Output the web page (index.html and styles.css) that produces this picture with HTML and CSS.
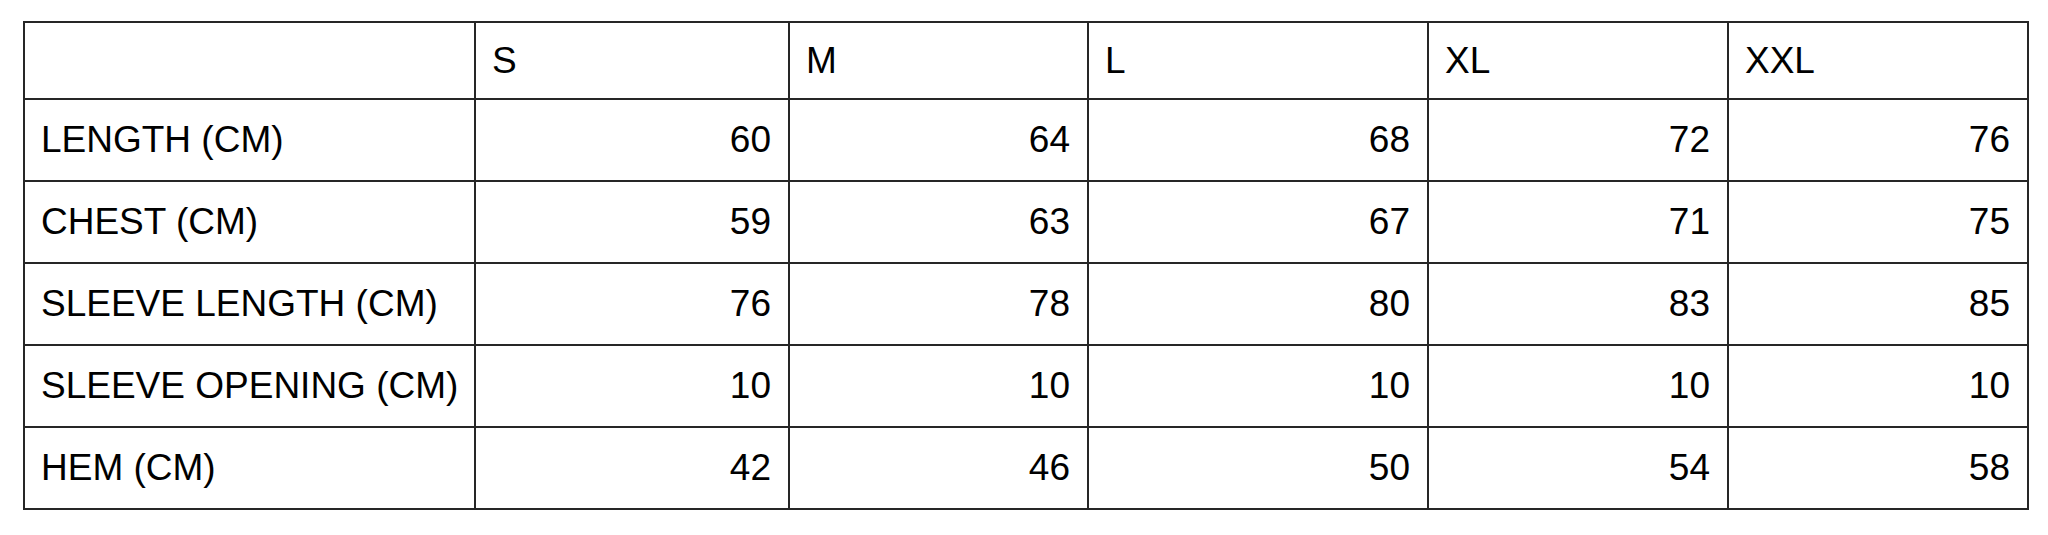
FILE: index.html
```html
<!DOCTYPE html>
<html>
<head>
<meta charset="utf-8">
<link rel="stylesheet" href="styles.css">
</head>
<body>
<table class="size-table">
  <colgroup>
    <col class="c-label">
    <col class="c-s">
    <col class="c-m">
    <col class="c-l">
    <col class="c-xl">
    <col class="c-xxl">
  </colgroup>
  <thead>
    <tr class="head-row">
      <th></th><th>S</th><th>M</th><th>L</th><th>XL</th><th>XXL</th>
    </tr>
  </thead>
  <tbody>
    <tr><td class="label">LENGTH (CM)</td><td>60</td><td>64</td><td>68</td><td>72</td><td>76</td></tr>
    <tr><td class="label">CHEST (CM)</td><td>59</td><td>63</td><td>67</td><td>71</td><td>75</td></tr>
    <tr><td class="label">SLEEVE LENGTH (CM)</td><td>76</td><td>78</td><td>80</td><td>83</td><td>85</td></tr>
    <tr><td class="label">SLEEVE OPENING (CM)</td><td>10</td><td>10</td><td>10</td><td>10</td><td>10</td></tr>
    <tr><td class="label">HEM (CM)</td><td>42</td><td>46</td><td>50</td><td>54</td><td>58</td></tr>
  </tbody>
</table>
</body>
</html>
```
FILE: styles.css
```css
html, body {
  margin: 0;
  padding: 0;
  background: #ffffff;
}
body {
  padding: 21px 0 0 23px;
  font-family: "Liberation Sans", Arial, sans-serif;
  color: #000;
}
.size-table {
  border-collapse: collapse;
  table-layout: fixed;
  width: 2006px;
  font-size: 37px;
}
.c-label { width: 451px; }
.c-s { width: 314px; }
.c-m { width: 299px; }
.c-l { width: 340px; }
.c-xl { width: 300px; }
.c-xxl { width: 300px; }
.size-table th,
.size-table td {
  border: 2px solid #262626;
  padding: 0 17px 0 16px;
  vertical-align: middle;
  white-space: nowrap;
}
.size-table th {
  font-weight: normal;
  text-align: left;
}
.head-row { height: 77px; }
.size-table tbody tr { height: 82px; }
.size-table td { text-align: right; }
.size-table td.label { text-align: left; }
```
